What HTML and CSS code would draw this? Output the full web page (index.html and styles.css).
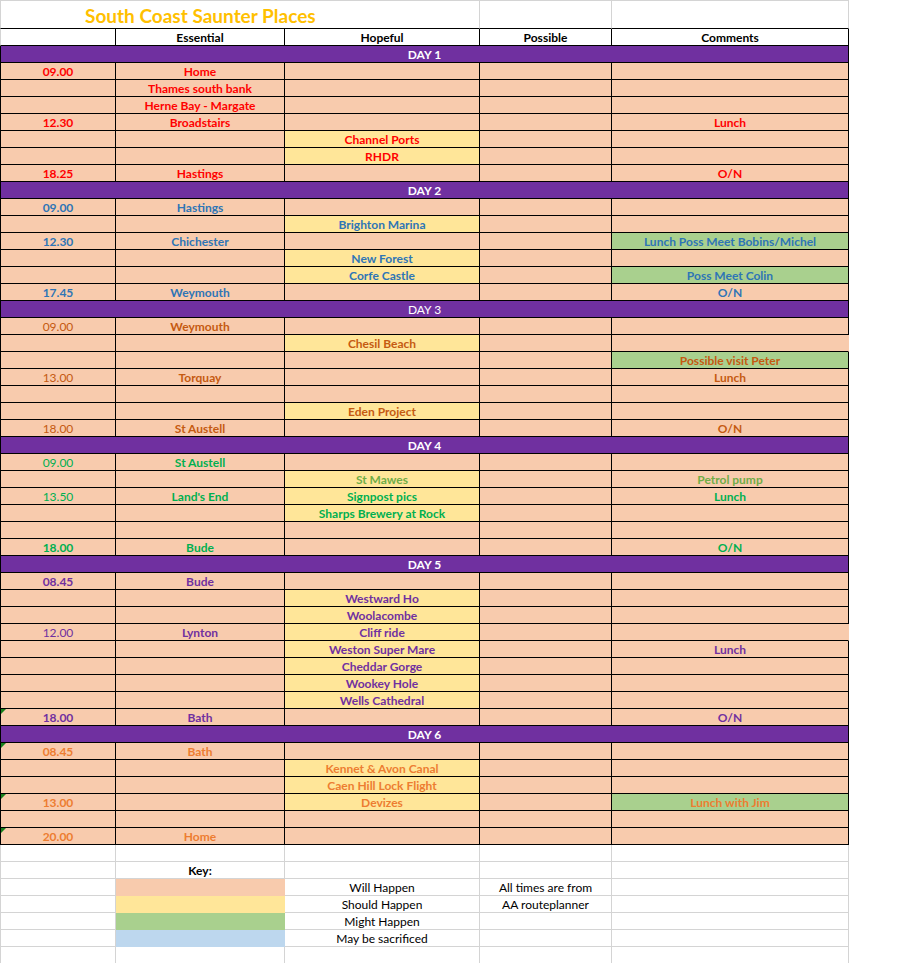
FILE: index.html
```html
<!DOCTYPE html>
<html>
<head>
<meta charset="utf-8">
<title>South Coast Saunter Places</title>
<link rel="stylesheet" href="styles.css">
</head>
<body>
<div class="sheet">
  <div class="row title">
    <div class="c ttl">South Coast Saunter Places</div><div class="c"></div><div class="c"></div>
  </div>
  <div class="row hdr">
    <div class="c"></div><div class="c">Essential</div><div class="c">Hopeful</div><div class="c">Possible</div><div class="c">Comments</div>
  </div>

  <div class="row day"><div class="c">DAY 1</div></div>
  <div class="row s d1"><div class="c">09.00</div><div class="c">Home</div><div class="c"></div><div class="c"></div><div class="c"></div></div>
  <div class="row s d1"><div class="c"></div><div class="c">Thames south bank</div><div class="c"></div><div class="c"></div><div class="c"></div></div>
  <div class="row s d1"><div class="c"></div><div class="c">Herne Bay - Margate</div><div class="c"></div><div class="c"></div><div class="c"></div></div>
  <div class="row s d1"><div class="c">12.30</div><div class="c">Broadstairs</div><div class="c"></div><div class="c"></div><div class="c">Lunch</div></div>
  <div class="row s d1"><div class="c"></div><div class="c"></div><div class="c y">Channel Ports</div><div class="c"></div><div class="c"></div></div>
  <div class="row s d1"><div class="c"></div><div class="c"></div><div class="c y">RHDR</div><div class="c"></div><div class="c"></div></div>
  <div class="row s d1"><div class="c">18.25</div><div class="c">Hastings</div><div class="c"></div><div class="c"></div><div class="c">O/N</div></div>

  <div class="row day"><div class="c">DAY 2</div></div>
  <div class="row s d2"><div class="c">09.00</div><div class="c">Hastings</div><div class="c"></div><div class="c"></div><div class="c"></div></div>
  <div class="row s d2"><div class="c"></div><div class="c"></div><div class="c y">Brighton Marina</div><div class="c"></div><div class="c"></div></div>
  <div class="row s d2"><div class="c">12.30</div><div class="c">Chichester</div><div class="c"></div><div class="c"></div><div class="c g">Lunch Poss Meet Bobins/Michel</div></div>
  <div class="row s d2"><div class="c"></div><div class="c"></div><div class="c y">New Forest</div><div class="c"></div><div class="c"></div></div>
  <div class="row s d2"><div class="c"></div><div class="c"></div><div class="c y">Corfe Castle</div><div class="c"></div><div class="c g">Poss Meet Colin</div></div>
  <div class="row s d2"><div class="c">17.45</div><div class="c">Weymouth</div><div class="c"></div><div class="c"></div><div class="c">O/N</div></div>

  <div class="row day"><div class="c n">DAY 3</div></div>
  <div class="row s d3"><div class="c n">09.00</div><div class="c">Weymouth</div><div class="c"></div><div class="c"></div><div class="c"></div></div>
  <div class="row s d3"><div class="c"></div><div class="c"></div><div class="c y">Chesil Beach</div><div class="c"></div><div class="c nr"></div></div>
  <div class="row s d3"><div class="c"></div><div class="c"></div><div class="c"></div><div class="c"></div><div class="c g">Possible visit Peter</div></div>
  <div class="row s d3"><div class="c n">13.00</div><div class="c">Torquay</div><div class="c"></div><div class="c"></div><div class="c">Lunch</div></div>
  <div class="row s d3"><div class="c"></div><div class="c"></div><div class="c"></div><div class="c"></div><div class="c"></div></div>
  <div class="row s d3"><div class="c"></div><div class="c"></div><div class="c y">Eden Project</div><div class="c"></div><div class="c"></div></div>
  <div class="row s d3"><div class="c n">18.00</div><div class="c">St Austell</div><div class="c"></div><div class="c"></div><div class="c">O/N</div></div>

  <div class="row day"><div class="c">DAY 4</div></div>
  <div class="row s d4"><div class="c n">09.00</div><div class="c">St Austell</div><div class="c"></div><div class="c"></div><div class="c"></div></div>
  <div class="row s d4"><div class="c"></div><div class="c"></div><div class="c y lg">St Mawes</div><div class="c"></div><div class="c lg">Petrol pump</div></div>
  <div class="row s d4"><div class="c n">13.50</div><div class="c">Land's End</div><div class="c y">Signpost pics</div><div class="c"></div><div class="c">Lunch</div></div>
  <div class="row s d4"><div class="c"></div><div class="c"></div><div class="c y">Sharps Brewery at Rock</div><div class="c"></div><div class="c"></div></div>
  <div class="row s d4"><div class="c"></div><div class="c"></div><div class="c"></div><div class="c"></div><div class="c"></div></div>
  <div class="row s d4"><div class="c">18.00</div><div class="c">Bude</div><div class="c"></div><div class="c"></div><div class="c">O/N</div></div>

  <div class="row day"><div class="c">DAY 5</div></div>
  <div class="row s d5"><div class="c">08.45</div><div class="c">Bude</div><div class="c"></div><div class="c"></div><div class="c"></div></div>
  <div class="row s d5"><div class="c"></div><div class="c"></div><div class="c y">Westward Ho</div><div class="c"></div><div class="c"></div></div>
  <div class="row s d5"><div class="c"></div><div class="c"></div><div class="c y">Woolacombe</div><div class="c"></div><div class="c"></div></div>
  <div class="row s d5"><div class="c n">12.00</div><div class="c">Lynton</div><div class="c y">Cliff ride</div><div class="c"></div><div class="c nr"></div></div>
  <div class="row s d5"><div class="c"></div><div class="c"></div><div class="c y">Weston Super Mare</div><div class="c"></div><div class="c">Lunch</div></div>
  <div class="row s d5"><div class="c"></div><div class="c"></div><div class="c y">Cheddar Gorge</div><div class="c"></div><div class="c"></div></div>
  <div class="row s d5"><div class="c"></div><div class="c"></div><div class="c y">Wookey Hole</div><div class="c"></div><div class="c"></div></div>
  <div class="row s d5"><div class="c"></div><div class="c"></div><div class="c y">Wells Cathedral</div><div class="c"></div><div class="c"></div></div>
  <div class="row s d5"><div class="c tri">18.00</div><div class="c">Bath</div><div class="c"></div><div class="c"></div><div class="c">O/N</div></div>

  <div class="row day"><div class="c">DAY 6</div></div>
  <div class="row s d6"><div class="c tri">08.45</div><div class="c">Bath</div><div class="c"></div><div class="c"></div><div class="c"></div></div>
  <div class="row s d6"><div class="c"></div><div class="c"></div><div class="c y">Kennet &amp; Avon Canal</div><div class="c"></div><div class="c"></div></div>
  <div class="row s d6"><div class="c"></div><div class="c"></div><div class="c y">Caen Hill Lock Flight</div><div class="c"></div><div class="c"></div></div>
  <div class="row s d6"><div class="c tri">13.00</div><div class="c"></div><div class="c y">Devizes</div><div class="c"></div><div class="c g">Lunch with Jim</div></div>
  <div class="row s d6"><div class="c"></div><div class="c"></div><div class="c"></div><div class="c"></div><div class="c"></div></div>
  <div class="row s d6"><div class="c tri">20.00</div><div class="c">Home</div><div class="c"></div><div class="c"></div><div class="c"></div></div>

  <div class="row k"><div class="c"></div><div class="c"></div><div class="c"></div><div class="c"></div><div class="c"></div></div>
  <div class="row k"><div class="c"></div><div class="c b">Key:</div><div class="c"></div><div class="c"></div><div class="c"></div></div>
  <div class="row k"><div class="c"></div><div class="c kp"></div><div class="c">Will Happen</div><div class="c">All times are from</div><div class="c"></div></div>
  <div class="row k"><div class="c"></div><div class="c ky"></div><div class="c">Should Happen</div><div class="c">AA routeplanner</div><div class="c"></div></div>
  <div class="row k"><div class="c"></div><div class="c kg"></div><div class="c">Might Happen</div><div class="c"></div><div class="c"></div></div>
  <div class="row k"><div class="c"></div><div class="c kb"></div><div class="c">May be sacrificed</div><div class="c"></div><div class="c"></div></div>
  <div class="row k"><div class="c"></div><div class="c"></div><div class="c"></div><div class="c"></div><div class="c"></div></div>
</div>
</body>
</html>
```

FILE: styles.css
```css
* { box-sizing: border-box; }
html, body { margin: 0; padding: 0; background: #fff; }
body {
  font-family: Lato, "Open Sans", "Liberation Sans", sans-serif;
  font-size: 12px;
  color: #000;
}
.sheet {
  width: 849px;
  border-top: 1px solid #d4d4d4;
}
.row {
  display: grid;
  grid-template-columns: 116px 169px 195px 132px 237px;
  height: 17px;
}
.c {
  position: relative;
  height: 17px;
  padding-top: 1px;
  line-height: 16px;
  text-align: center;
  white-space: nowrap;
  border-right: 1px solid #d4d4d4;
  border-bottom: 1px solid #d4d4d4;
}
.c:first-child { border-left: 1px solid #d4d4d4; }

/* title row */
.title { height: 28px; grid-template-columns: 480px 132px 237px; }
.title .c { height: 28px; border-bottom-color: #000; }
.ttl {
  text-align: left;
  padding: 3px 0 0 84px;
  font-size: 19px;
  line-height: 24px;
  font-weight: bold;
  color: #ffc000;
}

/* header row */
.hdr .c { border-color: #000; font-weight: bold; }
.hdr .c:first-child { border-left-color: #d4d4d4; }

/* day separator */
.day { grid-template-columns: 849px; }
.day .c {
  background: #7030a0;
  color: #fff;
  font-weight: bold;
  border-color: #000;
}

/* schedule rows */
.s .c {
  background: #f8cbad;
  border-color: #000;
  font-weight: bold;
}
.s .c.y { background: #ffe699; }
.s .c.g { background: #a9d08e; }
.s .c.nr { border-right-color: transparent; }
.c.n { font-weight: normal; }

.d1 .c { color: #ff0000; }
.d2 .c { color: #2e75b6; }
.d3 .c { color: #c55a11; }
.d4 .c { color: #00b050; }
.d4 .c.lg { color: #70ad47; }
.d5 .c { color: #7030a0; }
.d6 .c { color: #ed7d31; }

.tri::before {
  content: "";
  position: absolute;
  left: 0;
  top: 0;
  border-top: 5px solid #17801c;
  border-right: 5px solid transparent;
}

/* key */
.k .c.b { font-weight: bold; }
.k .c.kp { background: #f8cbad; border-color: #f8cbad; }
.k .c.ky { background: #ffe699; border-color: #ffe699; }
.k .c.kg { background: #a9d08e; border-color: #a9d08e; }
.k .c.kb { background: #bdd7ee; border-color: #bdd7ee; }
```
